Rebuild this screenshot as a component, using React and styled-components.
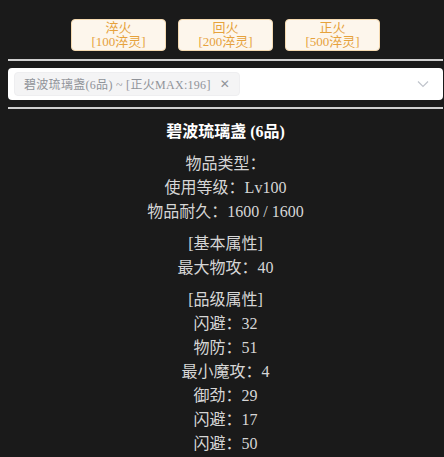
import React from 'react'
import styled, { createGlobalStyle } from 'styled-components'

const GlobalStyle = createGlobalStyle`
  html, body {
    margin: 0;
    background: #1a1a1a;
  }
  body {
    font-family: 'Liberation Serif', 'Noto Sans CJK SC', serif;
  }
`

const Page = styled.div`
  padding: 19px 1px 0 8px;
  min-height: 457px;
  box-sizing: border-box;
`

const ButtonRow = styled.div`
  display: flex;
  justify-content: center;
  gap: 12px;
`

const FireButton = styled.button`
  width: 95px;
  height: 32px;
  padding: 0;
  border: 1px solid #f5dab1;
  border-radius: 4px;
  background: #fdf6ec;
  color: #e6a23c;
  font-family: inherit;
  font-size: 13px;
  line-height: 14px;
  display: flex;
  flex-direction: column;
  align-items: center;
  justify-content: center;
  cursor: pointer;
`

const Rule = styled.div`
  height: 2px;
  background: #cfcfcf;
  margin: ${(p) => p.$margin};
`

const Select = styled.div`
  height: 32px;
  background: #fff;
  border-radius: 4px;
  display: flex;
  align-items: center;
  padding: 0 14px 0 6px;
  box-sizing: border-box;
`

const Tag = styled.span`
  height: 24px;
  box-sizing: border-box;
  display: inline-flex;
  align-items: center;
  gap: 9px;
  padding: 0 9px;
  background: #f4f4f5;
  border: 1px solid #eeeef0;
  border-radius: 4px;
  color: #909399;
  font-size: 12px;
  letter-spacing: 0.3px;
  white-space: nowrap;
`

const TagClose = styled.span`
  font-family: 'DejaVu Sans', sans-serif;
  font-size: 12px;
  color: #909399;
`

const Arrow = styled.svg`
  margin-left: auto;
`

const Info = styled.div`
  margin-top: 11px;
  text-align: center;
  font-size: 16px;
  line-height: 24px;
  color: #d6d6d6;
`

const Title = styled.div`
  color: #fff;
  font-weight: bold;
  margin-bottom: 1px;
`

const Group = styled.div`
  margin-top: 8px;
`

const options = [
  { name: '淬火', cost: '[100淬灵]' },
  { name: '回火', cost: '[200淬灵]' },
  { name: '正火', cost: '[500淬灵]' },
]

const groups = [
  ['物品类型：', '使用等级：Lv100', '物品耐久：1600 / 1600'],
  ['[基本属性]', '最大物攻：40'],
  ['[品级属性]', '闪避：32', '物防：51', '最小魔攻：4', '御劲：29', '闪避：17', '闪避：50'],
]

export default function App() {
  return (
    <>
      <GlobalStyle />
      <Page>
        <ButtonRow>
          {options.map((o) => (
            <FireButton key={o.name}>
              <span>{o.name}</span>
              <span>{o.cost}</span>
            </FireButton>
          ))}
        </ButtonRow>
        <Rule $margin="8px 0 7px" />
        <Select>
          <Tag>
            碧波琉璃盏(6品) ~ [正火MAX:196]
            <TagClose>✕</TagClose>
          </Tag>
          <Arrow width="12" height="8" viewBox="0 0 12 8">
            <polyline points="1,1.5 6,6.5 11,1.5" fill="none" stroke="#c0c4cc" strokeWidth="1.2" />
          </Arrow>
        </Select>
        <Rule $margin="7px 0 0" />
        <Info>
          <Title>碧波琉璃盏 (6品)</Title>
          {groups.map((g, i) => (
            <Group key={i}>
              {g.map((line, j) => (
                <div key={j}>{line}</div>
              ))}
            </Group>
          ))}
        </Info>
      </Page>
    </>
  )
}
